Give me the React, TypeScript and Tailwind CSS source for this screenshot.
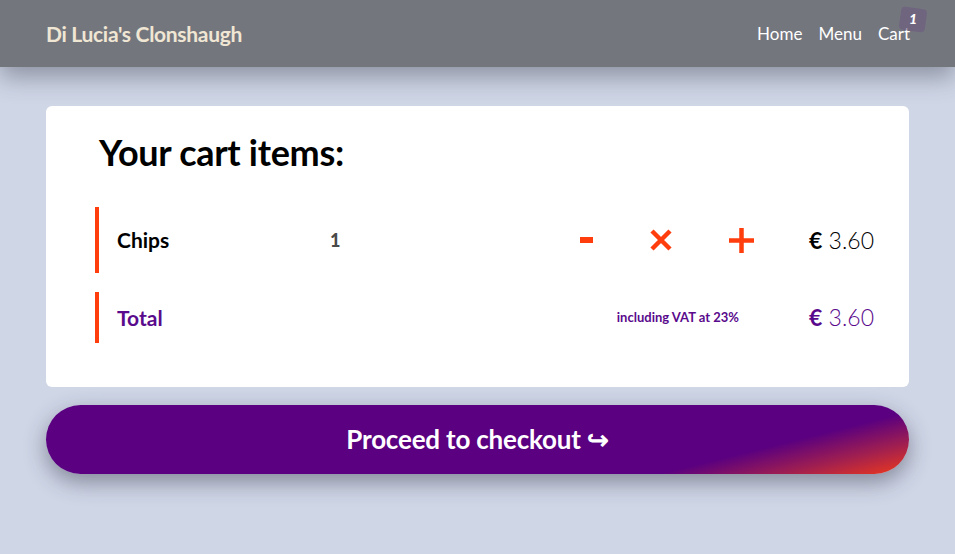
export default function App() {
  return (
    <div
      className="min-h-[554px] bg-[#cfd6e6]"
      style={{ fontFamily: '"Source Sans Pro", "Lato", "Liberation Sans", sans-serif' }}
    >
      {/* Navbar */}
      <nav className="relative z-10 flex h-[67px] items-center justify-between bg-[#74767e] pl-[46px] pr-[45px] shadow-[0_10px_25px_rgba(60,64,80,0.45)]">
        <span className="text-[21px] font-bold tracking-[-0.3px] text-[#f0e6d4]">
          Di Lucia's Clonshaugh
        </span>
        <div className="flex items-center gap-[16px] text-[17px] text-white">
          <a>Home</a>
          <a>Menu</a>
          <a className="relative">
            Cart
            <span className="absolute -top-[13px] left-[22px] h-[23px] w-[26px] rotate-[8deg] rounded-[4px] bg-[#6c5a80]/60" />
            <span className="absolute -top-[9px] left-[31px] text-[14px] font-black italic leading-none">
              1
            </span>
          </a>
        </div>
      </nav>

      <main className="px-[46px] pt-[39px]">
        {/* Cart card */}
        <div className="rounded-[6px] bg-white pb-[44px] pl-[49px] pr-[35px] pt-[26px]">
          <h1 className="mb-[35px] ml-[4px] text-[36px] font-bold leading-[40px] tracking-[-0.3px] text-black">
            Your cart items:
          </h1>

          <div className="flex h-[66px] items-center border-l-[4px] border-[#ff3d0d] pl-[18px]">
            <span className="w-[213px] text-[21px] font-bold text-black">Chips</span>
            <span className="flex-1 text-[18px] font-black text-[#4a4a4a]">1</span>
            <div className="flex items-center">
              <span className="block h-[6px] w-[13px] bg-[#ff3d0d]" />
              <span className="ml-[57px] flex items-center justify-center">
                <svg width="22" height="22" viewBox="0 0 22 22">
                  <path d="M2 2 L20 20 M20 2 L2 20" stroke="#ff3d0d" strokeWidth="4.5" />
                </svg>
              </span>
              <span className="ml-[57px] flex items-center justify-center">
                <svg width="25" height="25" viewBox="0 0 25 25">
                  <path d="M12.5 0 V25 M0 12.5 H25" stroke="#ff3d0d" strokeWidth="4.5" />
                </svg>
              </span>
            </div>
            <span className="ml-[55px] text-[23px] font-light text-black">
              <span className="font-bold">€</span> 3.60
            </span>
          </div>

          <div className="mt-[19px] flex h-[51px] items-center border-l-[4px] border-[#ff3d0d] pl-[18px]">
            <span className="flex-1 text-[21px] font-bold text-[#5a0a8c]">Total</span>
            <span className="text-[13px] font-bold text-[#5a0a8c]">including VAT at 23%</span>
            <span className="ml-[70px] text-[23px] font-light text-[#5a0a8c]">
              <span className="font-bold">€</span> 3.60
            </span>
          </div>
        </div>

        {/* Checkout */}
        <button className="mt-[18px] flex h-[69px] w-full items-center justify-center rounded-full bg-[linear-gradient(166deg,#5a0080_0%,#5a0080_78%,#a01f50_89%,#f03a1a_100%)] text-[26px] font-bold tracking-[-0.2px] text-white shadow-[0_8px_22px_rgba(40,40,60,0.45)]">
          Proceed to checkout ↪
        </button>
      </main>
    </div>
  );
}
